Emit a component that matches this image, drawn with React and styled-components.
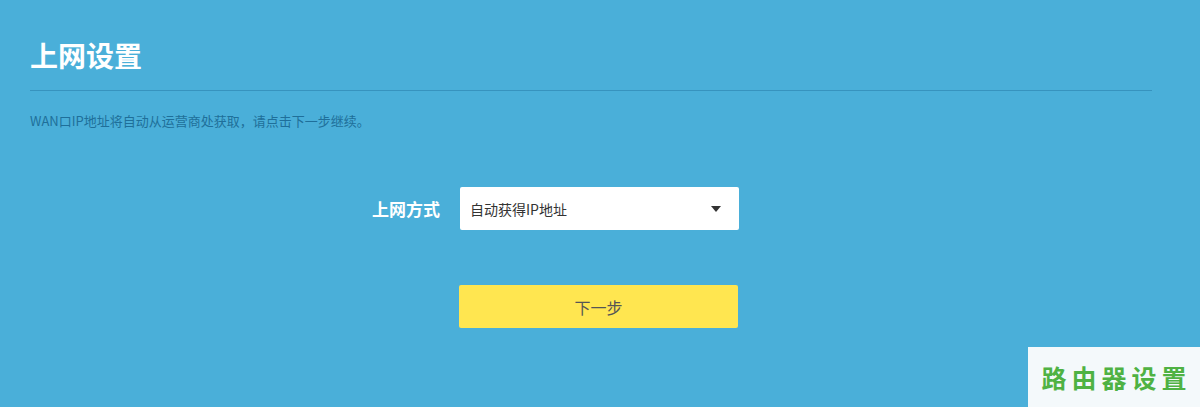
import React from 'react';
import styled, { createGlobalStyle } from 'styled-components';

const GlobalStyle = createGlobalStyle`
  html, body {
    margin: 0;
    padding: 0;
    background: #4aafd9;
  }
  body {
    font-family: "Noto Sans CJK SC", "Liberation Sans", sans-serif;
  }
`;

const Page = styled.div`
  position: relative;
  width: 1200px;
  height: 407px;
  background: #4aafd9;
  overflow: hidden;
  box-sizing: border-box;
  padding: 33px 48px 0 30px;
`;

const Title = styled.h1`
  margin: 0;
  font-size: 28px;
  line-height: 44px;
  font-weight: 700;
  color: #fff;
  padding-bottom: 13px;
  border-bottom: 1px solid #3793be;
`;

const Desc = styled.p`
  margin: 20px 0 0 0;
  font-size: 13px;
  line-height: 20px;
  color: #1f6f9a;
`;

const Form = styled.div`
  margin-top: 56px;
  display: flex;
  flex-direction: column;
  gap: 55px;
`;

const Row = styled.div`
  display: flex;
  align-items: center;
  gap: 20px;
`;

const Label = styled.label`
  width: 410px;
  text-align: right;
  font-size: 17px;
  font-weight: 700;
  color: #fff;
`;

const Select = styled.div`
  width: 279px;
  height: 43px;
  box-sizing: border-box;
  background: #fff;
  border-radius: 2px;
  display: flex;
  align-items: center;
  justify-content: space-between;
  padding: 0 18px 0 10px;
  font-size: 14px;
  color: #333;
`;

const Arrow = styled.span`
  width: 0;
  height: 0;
  border-left: 5px solid transparent;
  border-right: 5px solid transparent;
  border-top: 6px solid #333;
`;

const Button = styled.button`
  margin-left: ${p => p.$offset}px;
  width: 279px;
  height: 43px;
  border: none;
  border-radius: 2px;
  background: #ffe650;
  color: #555;
  font-family: inherit;
  font-size: 16px;
  cursor: pointer;
`;

const Watermark = styled.div`
  position: absolute;
  right: 0;
  bottom: 0;
  width: 172px;
  height: 60px;
  background: #f4f9fb;
  display: flex;
  align-items: center;
  justify-content: center;
  font-size: 25px;
  font-weight: 700;
  letter-spacing: 5px;
  color: #4fb243;
  padding-left: 5px;
  box-sizing: border-box;
`;

export default function App() {
  return (
    <>
      <GlobalStyle />
      <Page>
        <Title>上网设置</Title>
        <Desc>WAN口IP地址将自动从运营商处获取，请点击下一步继续。</Desc>
        <Form>
          <Row>
            <Label>上网方式</Label>
            <Select>
              <span>自动获得IP地址</span>
              <Arrow />
            </Select>
          </Row>
          <Button $offset={429}>下一步</Button>
        </Form>
        <Watermark>路由器设置</Watermark>
      </Page>
    </>
  );
}
